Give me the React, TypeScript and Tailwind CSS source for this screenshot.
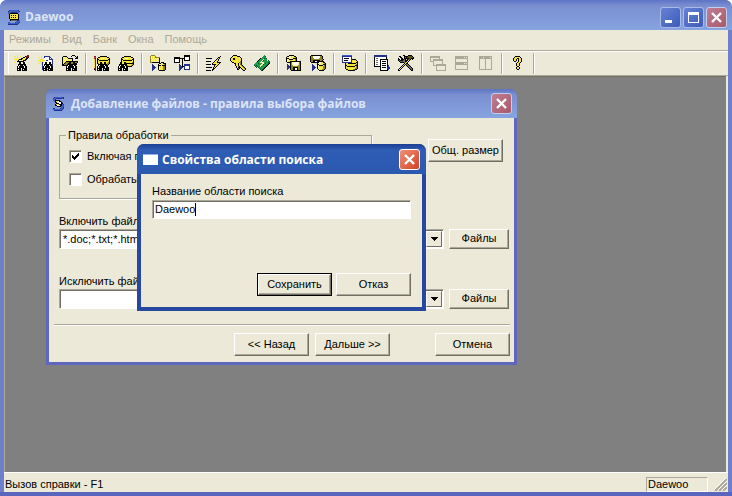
import React from 'react'
import clsx from 'clsx'

const palette: Record<string, string> = {
  k: '#000000',
  w: '#ffffff',
  y: '#f4e43c',
  l: '#fbf6a8',
  o: '#8f8420',
  r: '#7d1a1a',
  R: '#d83a2a',
  b: '#23308c',
  B: '#3f5fc0',
  g: '#aca899',
  d: '#6b6a5c',
  G: '#1f9a4c',
  D: '#0c5a34',
  m: '#5a5222',
}

const newSearch = [
  '...y.........rr.',
  'y..y..y....krrr.',
  '.y.y.y...kkyrrk.',
  '..yyy..kkyyykk..',
  'yyywykkkyyykk...',
  '..yykwwyykkk....',
  '.y.kkkkkkk......',
  'y..y.kk..kk.....',
  '.....kk..kk.....',
  '....kkkkkkkk....',
  '....kwkkkwkk....',
  '...kwkkkkkwkk...',
  '...kwkkkkkwkk...',
  '...kkkkwkkkkk...',
  '...kwkk.kwkkk...',
  '...kkkk.kkkkk...',
]
const newDoc = [
  '...y..bbbbbb....',
  'y..y.ybwwwwbb...',
  '.y.y.ywwwwwbwb..',
  '..yyywwwwwwbbbb.',
  'yyywyyywbbwwwwb.',
  '..yyywwwwwwwwwb.',
  '.y.ybywkkwwkkwb.',
  'y..ybwwkkwwkkwb.',
  '...ybwkkkkkkkkb.',
  '....bwkwkkkwkkb.',
  '....bkwkkkkkwkk.',
  '....bkwkkkkkwkk.',
  '....bkkkkwkkkkk.',
  '....bkwkkbkwkkk.',
  '.....kkkk.kkkkk.',
]
const openDoc = [
  '..........kkk...',
  '.kkkk....k...k.k',
  'kylylk........kk',
  'klylylkkkkk..kkk',
  'kylylylylyk.....',
  'klylylylylk.....',
  'kylykkkkkkkkkkkk',
  'klykoookkookkook',
  'kykoookkkookkkk.',
  'kkoookkkkkkkkkk.',
  'kkkkkkwkkkkwkk..',
  '....kwkkkkkkwkk.',
  '....kwkkkkkkwkk.',
  '....kkkkkwkkkkk.',
  '....kwkkk.kwkkk.',
  '....kkkkk.kkkkk.',
]
const dbEdit = [
  'rr....kkkkkkk...',
  'RR..kkyyyyyyykk.',
  'rr.kyyylllyyyyyk',
  'yr.kkyyyyyyyyykk',
  'yr.kykkkkkkkkkyk',
  'yr.kyyyyyyyyyyyk',
  'yr.kyykkyykkyyok',
  'yr.koykkoykkyook',
  'yr..kkkkkkkkkok.',
  'yr..kwkkkkwkkk..',
  'yr.kwkkkkkkwkk..',
  'yr.kwkkkkkkwkkk.',
  'rr.kkkkkwkkkkkk.',
  'kr.kwkkk.kwkkkk.',
  '.r.kkkkk.kkkkkk.',
]
const dbSearch = [
  '......kkkkkkk...',
  '....kkyyyyyyykk.',
  '...kyyylllyyyyyk',
  '...kkyyyyyyyyykk',
  '...kykkkkkkkkkyk',
  '...kyyyyyyyyyyyk',
  '..kkyykkyyyyyyok',
  '..kkyykkkkkkkkkk',
  '.kkkkkkkkyyyyyok',
  '.kwkkkwkkoyyyok.',
  'kwkkkkkwkkkkkk..',
  'kwkkkkkwkk......',
  'kkkkwkkkkk......',
  'kwkk.kwkkk......',
  'kkkk.kkkkk......',
]
const folderToDb = [
  '.oooo...........',
  'olylyo..........',
  'olylyooooo......',
  'olylylylyk......',
  'oylylylylk......',
  'olylylylyk......',
  'oylylylylk......',
  'ookkkkkkkk.kkk..',
  '.........kklykkk',
  '..b.....kllyyyok',
  '..bb....kkklkkkk',
  '..bbb...klyyyook',
  '..bbbb..klyyyook',
  '..bbb...klyyyook',
  '..bb....klyyyook',
  '..b......kkkkkk.',
]
const network = [
  '..........kkkkkk',
  '..........kkkkkk',
  'kkkkkk....kwwwwk',
  'kkkkkkkkkkkwwwwk',
  'kwwwwk..k.kwwwwk',
  'kwwwwk..k.kkkkkk',
  'kwwwwk..k.......',
  'kkkkkk..k.......',
  '........k.......',
  '.....b..k.bbbbbb',
  '.....bb.k.bbbbbb',
  '.....bbbkkbwwwwb',
  '.....bbbb.bwwwwb',
  '.....bbb..bwwwwb',
  '.....bb...bbbbbb',
  '.....b..........',
]
const runList = [
  '..............k.',
  '............kk..',
  'kkkkkk.....kyk..',
  '..........kyk...',
  '.........kyyk...',
  'kkkkk...kyyk....',
  '.......kyyykkkk.',
  '......klyyyyyk..',
  'kkkkk.kkkkyyk...',
  '........kyyk....',
  '........kyk.....',
  'kkkkkk.kyk......',
  '.......kk.......',
  '......kk........',
  'kkkkk.k.........',
]
const keyIcon = [
  '...kkkk.........',
  '..kyyyykkk......',
  '.kylyyyyyyk.....',
  'kyykkyyyyyyk....',
  'kyykkyyyyyyk....',
  'kyyyyyyyyyyk....',
  '.kyyyyyyyyok....',
  '..kkyyyyyook....',
  '....kkyykyok....',
  '.....kyykyok....',
  '.....kyykyyok...',
  '......kyokyyok..',
  '......kykkkyyok.',
  '.......kok.kyyok',
  '.......kk...kyyk',
  '.............kk.',
]
const bookIcon = [
  '..........G.....',
  '.........GGD....',
  '........GGGG....',
  '......kGGGDGD...',
  '.....kGGGlGGG...',
  '....kGGGlDGGG.D.',
  '...kGGGlGGGGGGGD',
  '..GGGGllllGGGGDD',
  '.GGGDGGGllGDGGDk',
  'GGGGGGGllDGGGDk.',
  'DGDGGGllGGGGDk..',
  '.DGDGGlDGGGDk...',
  '..D.DGGGGGDk....',
  '.....DGGGDk.....',
  '......DGDk......',
  '.......Dk.......',
]
const dbToDisk = [
  '...kkkkk........',
  '.kkllylykk......',
  'kllllyyyyok.....',
  'kkkllllkkkk.....',
  'klykkkkyyok.....',
  'kllyyyyyyok.....',
  'klyykkkkkkkkkkk.',
  '.kkkkolwwwwwlok.',
  '....kolwwwwwlok.',
  '.b..kolwwwwwlok.',
  '.bb.koolllllook.',
  '.bbbkoooooooook.',
  '.bbbkookkkkkook.',
  '.bb.kookkwwkook.',
  '.b..kookkwwkook.',
  '.....kkkkkkkkkk.',
]
const diskToDb = [
  '.kkkkkkkkkkk....',
  'koowwwwwwwook...',
  'koowwwwwwwook...',
  'kooowwwwwoook...',
  'kooooooooooook..',
  'kookkkkkkkook...',
  'kookkwwkkkkkkk..',
  '.kkkkkkkkllyykk.',
  '.......klllyyyok',
  '..b....kkllyykkk',
  '..bb...klkkkkyok',
  '..bbb..klyyyyook',
  '..bbbb.klyyyyook',
  '..bbb..klyyyyook',
  '..bb....klyyook.',
  '..b......kkkkk..',
]
const dbWindow = [
  'BBBBBBBBBB......',
  'bbbbbbbbbb......',
  'bwwwwwwwwb......',
  'bwkkkkkwwb......',
  'bwwwwwwwwbkkkk..',
  'bwkkkkwwwbyyyyk.',
  'bwwwwwwwwbyyyyyk',
  'bbbbbbbbbbyyyykk',
  '...kyykkkkkkkkyk',
  '...kyyyyyyyyyyok',
  '...kkyyyyyyyykkk',
  '...kykkkkkkkkyok',
  '...kyyyyyyyyyyok',
  '...kyyyyyyyyyook',
  '....kkyyyyyookk.',
  '......kkkkkkk...',
]
const pagesIcon = [
  'bbbbbbbbbbbbb...',
  'bbbbbbbbbbbbb...',
  'kwwwwwwwwwwwk...',
  'kwddwwwwwwwwk...',
  'kwwwwwkkkkkkkk..',
  'kwddwwkwwwwwwk..',
  'kwwwwwkwkkkkwk..',
  'kwddwwkwwwwwwk..',
  'kwwwwwkwkkkkwk..',
  'kwddwwkwwwwwwk..',
  'kwwwwwkwkkkkwkb.',
  'kkkkkkkwwwwwwkb.',
  '......kwkkkkwbbb',
  '......kwwwwwwbbb',
  '......kwwwwwwkb.',
  '......kkkkkkkk..',
]
const toolsIcon = [
  '.....kk...kkkk..',
  '.kk...kkkkmmmmk.',
  '..kk..kdkmmmmmmk',
  'k..kk.kkkkkmmkkk',
  'kk.kkkdk.kmmk.k.',
  'kdkkkddkkkyk....',
  '.kdddddkkyk.....',
  '..kkkkddyk......',
  '......kykk......',
  '.....kykddk.....',
  '....kyk.kddk....',
  '...kyk...kddk...',
  '..kyk.....kddk..',
  '.kyk.......kddk.',
  'kyk.........kdk.',
  'kk...........kk.',
]
const cascadeIcon = [
  'gggggggggg......',
  'gggggggggg......',
  'g........g......',
  'g..gggggggggg...',
  'g..gggggggggg...',
  'gggg........g...',
  '...g........g...',
  '...g........g...',
  '...g..gggggggggg',
  '...ggggggggggggg',
  '......g........g',
  '......g........g',
  '......g........g',
  '......g........g',
  '......gggggggggg',
]
const tileRows = [
  '.ggggggggggggg..',
  '.ggggggggg.g.g..',
  '.ggggggggggggg..',
  '.g...........g..',
  '.g...........g..',
  '.g...........g..',
  '.ggggggggggggg..',
  '.ggggggggg.g.g..',
  '.ggggggggggggg..',
  '.g...........g..',
  '.g...........g..',
  '.g...........g..',
  '.g...........g..',
  '.ggggggggggggg..',
]
const tileCols = [
  '.ggggggggggggg..',
  '.gggg.gggggg.g..',
  '.ggggggggggggg..',
  '.g.....g.....g..',
  '.g.....g.....g..',
  '.g.....g.....g..',
  '.g.....g.....g..',
  '.g.....g.....g..',
  '.g.....g.....g..',
  '.g.....g.....g..',
  '.g.....g.....g..',
  '.g.....g.....g..',
  '.g.....g.....g..',
  '.ggggggggggggg..',
]
const helpIcon = [
  '.....kkkkk......',
  '....kyyyyyk.....',
  '...kyyykkyyk....',
  '...kyyk.kyyk....',
  '...kyyk.kyyk....',
  '....kk..kyyk....',
  '.......kyyk.....',
  '......kyyk......',
  '......kyyk......',
  '......kyyk......',
  '.......kk.......',
  '......kyyk......',
  '......kyyk......',
  '.......kk.......',
]
const appIcon = [
  '.bBBBBBBBBb.',
  'bBBBBBBBBBBb',
  'BBBbbbbbbBB.',
  'BBkkkkkkkk..',
  '.kyyyyyyyyk.',
  '.kykykykyyk.',
  '.kyyyyyyyyk.',
  '.kykykykyyk.',
  '.kyyyyyyyyk.',
  '..kkkkkkkkk.',
  '..kddddddbbB',
  '........BBBB',
  'BB.....bBBBb',
  'BBBBBBBBBBb.',
  'bbbbbbbbbb..',
]
const wizardIcon = [
  '.bBBBBBBBbb',
  'bBBbbbbbbBb',
  'BBb........',
  'BBkkkkk....',
  '.BkyywkkB..',
  '..kkwwwwkB.',
  '...kkkwwkk.',
  '..kyyykkkBb',
  '..kkwwwkkBB',
  '....kkkkBBB',
  '........BBb',
  'bb.....bBBb',
  'BBBBBBBBBb.',
  '.bbbbbbbb..',
]

const PixelIcon: React.FC<{ rows: string[] }> = ({ rows }) => {
  const cols = rows[0].length
  return (
    <svg width={cols} height={rows.length} viewBox={`0 0 ${cols} ${rows.length}`} shapeRendering="crispEdges" className="shrink-0" aria-hidden="true">
      {rows.map((row, y) =>
        row.split('').map((c, x) => (palette[c] ? <rect key={`${x}-${y}`} x={x} y={y} width={1} height={1} fill={palette[c]} /> : null))
      )}
    </svg>
  )
}

const toolGroups = [
  [
    { name: 'Новый поиск', rows: newSearch },
    { name: 'Новый документ', rows: newDoc },
    { name: 'Открыть', rows: openDoc },
  ],
  [
    { name: 'Изменить банк', rows: dbEdit },
    { name: 'Поиск в банке', rows: dbSearch },
  ],
  [
    { name: 'Добавить файлы', rows: folderToDb },
    { name: 'Сеть', rows: network },
  ],
  [
    { name: 'Выполнить', rows: runList },
    { name: 'Ключ', rows: keyIcon },
    { name: 'Словарь', rows: bookIcon },
  ],
  [
    { name: 'Сохранить банк', rows: dbToDisk },
    { name: 'Загрузить банк', rows: diskToDb },
  ],
  [{ name: 'Свойства банка', rows: dbWindow }],
  [
    { name: 'Список', rows: pagesIcon },
    { name: 'Настройка', rows: toolsIcon },
  ],
  [
    { name: 'Каскад', rows: cascadeIcon },
    { name: 'По горизонтали', rows: tileRows },
    { name: 'По вертикали', rows: tileCols },
  ],
  [{ name: 'Справка', rows: helpIcon }],
]

const menu = ['Режимы', 'Вид', 'Банк', 'Окна', 'Помощь']

const CloseButton: React.FC<{ active?: boolean }> = ({ active }) => (
  <button
    type="button"
    aria-label="Закрыть"
    className={clsx(
      'flex h-[21px] w-[21px] shrink-0 items-center justify-center rounded-[3px] border',
      active ? 'border-white bg-linear-to-br from-[#ee9078] to-[#d0401c]' : 'border-[#c3cdee] bg-linear-to-br from-[#bf7f93] to-[#a8586a]'
    )}
  >
    <svg width="13" height="13" viewBox="0 0 13 13" aria-hidden="true">
      <path d="M2 2 L11 11 M11 2 L2 11" stroke="#fff" strokeWidth="2.4" />
    </svg>
  </button>
)

const Button: React.FC<{ children: React.ReactNode; className?: string; isDefault?: boolean }> = ({ children, className, isDefault }) => (
  <button
    type="button"
    className={clsx('flex bg-[#ece9d8] whitespace-nowrap', isDefault && 'border border-black', className)}
  >
    <span className="flex h-full w-full items-center justify-center border border-t-white border-l-white border-r-[#716f64] border-b-[#716f64] pb-px shadow-[inset_-1px_-1px_0_#aca899]">
      {children}
    </span>
  </button>
)

const sunken = 'border border-t-[#aca899] border-l-[#aca899] border-r-white border-b-white bg-white shadow-[inset_1px_1px_0_#716f64]'

const Check: React.FC<{ label: string; checked?: boolean }> = ({ label, checked }) => (
  <label className="flex h-[23px] items-center gap-[5px] whitespace-nowrap">
    <span className="relative flex h-[13px] w-[13px] shrink-0">
      <input type="checkbox" defaultChecked={checked} className={clsx('peer h-[13px] w-[13px] appearance-none', sunken)} />
      <svg width="13" height="13" viewBox="0 0 13 13" shapeRendering="crispEdges" className="pointer-events-none absolute inset-0 hidden peer-checked:block" aria-hidden="true">
        <path d="M3 5h1v1h1v1h1v-1h1v-1h1v-1h1v-1h1v3h-1v1h-1v1h-1v1h-1v1h-1v-1h-1v-1h-1z" fill="#000" />
      </svg>
    </span>
    {label}
  </label>
)

const FileMask: React.FC<{ id: string; label: string; value: string }> = ({ id, label, value }) => (
  <div>
    <label htmlFor={id} className="block h-4 leading-4">
      {label}
    </label>
    <div className="flex gap-[5px]">
      <div className={clsx('flex h-5 flex-1 p-px', sunken)}>
        <input id={id} defaultValue={value} className="ml-px min-w-0 flex-1 px-px outline-none" />
        <button type="button" aria-label="Показать список" className="flex w-4 items-center justify-center border border-t-white border-l-white border-r-[#716f64] border-b-[#716f64] bg-[#ece9d8]">
          <svg width="7" height="4" viewBox="0 0 7 4" shapeRendering="crispEdges" aria-hidden="true">
            <path d="M0 0h7v1h-1v1h-1v1h-1v1h-1v-1h-1v-1h-1v-1h-1z" />
          </svg>
        </button>
      </div>
      <Button className="h-5 w-[60px]">Файлы</Button>
    </div>
  </div>
)

const titleText = "font-['Open_Sans','Noto_Sans',sans-serif] text-[12px] font-bold whitespace-nowrap"
const idleTitle = 'bg-linear-to-b from-[#5d74c4] via-[#7b8fd0] via-20% to-[#86a4e0]'

const AddFilesDialog: React.FC = () => (
  <section role="dialog" aria-labelledby="add-title" className="absolute top-3 left-[41px] w-[471px] overflow-hidden rounded-t-[7px] bg-[#5e66bd] pb-[3px]">
    <header className={clsx('flex h-[29px] items-center gap-[7px] pr-[5px] pl-[7px]', idleTitle)}>
      <PixelIcon rows={wizardIcon} />
      <h2 id="add-title" className={clsx('flex-1 pt-px text-[#dce4f8]', titleText)}>
        Добавление файлов - правила выбора файлов
      </h2>
      <CloseButton />
    </header>
    <div className="mx-[3px] bg-[#ece9d8] pr-1 pb-[6px] pl-[5px]">
      <div className="flex items-start justify-between pt-[10px] pr-[7px] pl-[5px]">
        <fieldset className="h-[71px] w-[313px] border border-[#aca899] pt-[3px] pl-[9px] shadow-[1px_1px_0_#fff]">
          <legend className="-ml-[3px] h-[14px] px-[2px] leading-[14px]">Правила обработки</legend>
          <Check label="Включая п" checked />
          <Check label="Обрабаты" />
        </fieldset>
        <Button className="mt-[11px] h-[23px] w-[75px]">Общ. размер</Button>
      </div>
      <div className="mt-[14px] flex flex-col gap-6 pr-px pl-[5px]">
        <FileMask id="include" label="Включить файлы" value="*.doc;*.txt;*.htm;*.html;*.rtf" />
        <FileMask id="exclude" label="Исключить файлы" value="" />
      </div>
      <hr className="mt-[15px] h-[2px] border-t border-b border-t-[#aca899] border-b-white" />
      <div className="mt-[7px] flex gap-[6px]">
        <Button className="ml-auto h-[23px] w-[75px]">&lt;&lt; Назад</Button>
        <Button className="h-[23px] w-[75px]">Дальше &gt;&gt;</Button>
        <Button className="ml-[39px] h-[23px] w-[75px]">Отмена</Button>
      </div>
    </div>
  </section>
)

const AreaDialog: React.FC = () => (
  <section role="dialog" aria-labelledby="area-title" className="absolute top-[67px] left-[132px] w-[289px] overflow-hidden rounded-t-[7px] bg-[#2748a0] pb-[4px]">
    <header className="flex h-[30px] items-center gap-1 bg-linear-to-b from-[#1c3f92] via-[#2f5cb4] via-20% to-[#2b59b0] pt-px pr-[6px] pl-[6px]">
      <span className="h-[11px] w-[15px] border-t border-[#8fb0e8] bg-white" />
      <h2 id="area-title" className={clsx('flex-1 pt-px text-white', titleText)}>
        Свойства области поиска
      </h2>
      <CloseButton active />
    </header>
    <div className="mx-[4px] bg-[#ece9d8] px-[11px] pt-[9px] pb-[11px]">
      <label htmlFor="area" className="block h-[17px] leading-4">
        Название области поиска
      </label>
      <div className={clsx('flex h-[19px] items-center px-[2px]', sunken)}>
        <input id="area" defaultValue="Daewoo" className="w-[40px] outline-none" />
        <span className="h-[13px] w-px bg-black" />
      </div>
      <div className="mt-[54px] flex justify-end gap-1">
        <Button isDefault className="h-[23px] w-[75px]">
          Сохранить
        </Button>
        <Button className="h-[23px] w-[75px]">Отказ</Button>
      </div>
    </div>
  </section>
)

const App: React.FC = () => {
  return (
    <div className="bg-white">
      <div className="flex h-screen flex-col overflow-hidden rounded-t-[7px] border-b-4 border-[#5a66bd] bg-[#6f7fcb] font-['Liberation_Sans',Arial,sans-serif] text-[11px] text-black">
        <header className={clsx('flex h-[30px] shrink-0 items-center gap-[5px] pt-1 pr-[5px] pl-[8px]', idleTitle)}>
          <PixelIcon rows={appIcon} />
          <h1 className={clsx('flex-1 text-[#dce4f8]', titleText)}>Daewoo</h1>
          <div className="flex gap-[2px]">
            <button type="button" aria-label="Свернуть" className="flex h-[21px] w-[21px] items-end rounded-[3px] border border-[#a9b9e8] bg-linear-to-br from-[#6682d4] to-[#3d5bb8] pb-[4px] pl-[4px]">
              <span className="h-[3px] w-[7px] bg-white" />
            </button>
            <button type="button" aria-label="Развернуть" className="flex h-[21px] w-[21px] items-center justify-center rounded-[3px] border border-[#a9b9e8] bg-linear-to-br from-[#6682d4] to-[#3d5bb8]">
              <span className="h-[11px] w-[11px] border border-t-[3px] border-white" />
            </button>
            <CloseButton />
          </div>
        </header>
        <div className="mx-1 flex min-h-0 flex-1 flex-col bg-[#ece9d8]">
          <nav className="flex h-[21px] shrink-0 items-center gap-px border-b border-[#aca899] pb-[2px] text-[#aca899]">
            {menu.map((item) => (
              <button key={item} type="button" className="px-[5px]">
                {item}
              </button>
            ))}
          </nav>
          <div role="toolbar" className="flex h-[25px] shrink-0 items-center border-t border-b border-t-white border-b-[#aca899] pb-px pl-[4px]">
            <span className="mr-px h-[22px] w-px bg-white" />
            {toolGroups.map((group, i) => (
              <div key={i} className="flex items-center">
                {group.map((tool) => (
                  <button key={tool.name} type="button" aria-label={tool.name} className="flex h-[22px] w-6 items-center justify-center">
                    <PixelIcon rows={tool.rows} />
                  </button>
                ))}
                <span className="mx-[3px] h-[21px] w-[2px] border-r border-l border-r-white border-l-[#aca899]" />
              </div>
            ))}
          </div>
          <main className="relative mr-[2px] min-h-0 flex-1 border-t border-l border-t-[#716f64] border-l-[#aca899] bg-[#808080]">
            <AddFilesDialog />
            <AreaDialog />
          </main>
          <footer className="flex h-5 shrink-0 items-center border-t border-white pl-px">
            <span className="flex-1 pt-[3px]">Вызов справки - F1</span>
            <span className="mt-[3px] h-[15px] w-[62px] border border-t-[#aca899] border-l-[#aca899] border-r-white border-b-white pl-px leading-[13px]">Daewoo</span>
            <svg width="13" height="13" viewBox="0 0 13 13" className="mt-[4px] ml-[6px] mr-px" aria-hidden="true">
              <path d="M1 13L13 1M5 13L13 5M9 13L13 9" stroke="#aca899" strokeWidth="2" />
              <path d="M0 12L12 0M4 12L13 3M8 12L13 7" stroke="#fff" />
            </svg>
          </footer>
        </div>
      </div>
    </div>
  )
}

export default App
